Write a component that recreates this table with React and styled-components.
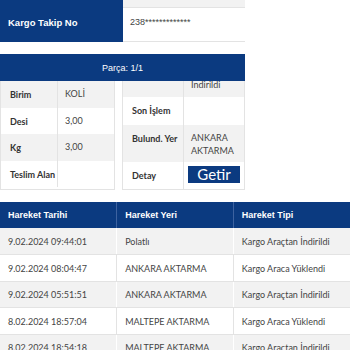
import styled, { createGlobalStyle } from "styled-components";

const navy = "#0b3a80";
const stripe = "#f2f2f2";
const line = "#e3e3e3";

const GlobalStyle = createGlobalStyle`
  *, *::before, *::after { box-sizing: border-box; }
  body {
    margin: 0;
    background: #fff;
    font-family: "Lato", "Noto Sans", sans-serif;
    color: #333;
  }
`;

const Page = styled.div`
  width: 350px;
  height: 350px;
  overflow: hidden;
`;

const Summary = styled.div`
  width: 245px;
  display: grid;
  grid-template-columns: 123px 122px;
`;

const SummaryHead = styled.div`
  background: ${navy};
  color: #fff;
  font-family: "Liberation Sans", Arial, sans-serif;
  font-weight: bold;
  font-size: 9.5px;
  height: ${p => p.h}px;
  display: flex;
  align-items: center;
  padding: 0 0 6px 8px;
`;

const SummaryValue = styled.div`
  background: ${p => (p.alt ? stripe : "#fff")};
  font-family: "Liberation Sans", Arial, sans-serif;
  font-size: 9px;
  color: #444;
  height: ${p => p.h}px;
  display: flex;
  align-items: center;
  padding: 0 0 6px 7px;
  border-bottom: 1px solid ${line};
`;

const Piece = styled.div`
  width: 245px;
  margin-top: 12px;
`;

const PieceTitle = styled.div`
  background: ${navy};
  color: #fff;
  font-family: "Liberation Sans", Arial, sans-serif;
  font-size: 9px;
  height: 27px;
  display: flex;
  align-items: center;
  justify-content: center;
`;

const PieceBody = styled.div`
  display: grid;
  grid-template-columns: 115px 123px;
  column-gap: 7px;
  height: 109px;
`;

const InfoTable = styled.div`
  display: grid;
  grid-template-columns: ${p => p.cols};
  grid-template-rows: ${p => p.rows};
  border: 1px solid ${line};
  border-top: none;
  overflow: hidden;
`;

const InfoLabel = styled.div`
  background: ${p => (p.alt ? stripe : "#fff")};
  font-weight: bold;
  font-size: 9px;
  line-height: 13px;
  color: #333;
  padding: 7px 0 0 9px;
  white-space: nowrap;
  border-right: 1px solid ${line};
`;

const InfoValue = styled.div`
  background: ${p => (p.alt ? stripe : "#fff")};
  font-size: 9px;
  color: #444;
  line-height: 12.5px;
  padding: 7px 6px 0 7px;
  overflow: hidden;
`;

const ClippedValue = styled(InfoValue)`
  padding: 0 6px 6px 7px;
  display: flex;
  align-items: flex-end;
`;

const ButtonCell = styled(InfoValue)`
  padding: 4px 0 0 4px;
`;

const GetirButton = styled.button`
  background: ${navy};
  color: #fff;
  border: none;
  font-family: "Lato", sans-serif;
  font-size: 15px;
  width: 52px;
  height: 17px;
  padding: 0;
  line-height: 17px;
`;

const Moves = styled.table`
  width: 350px;
  margin-top: 12px;
  border-collapse: collapse;
  table-layout: fixed;
`;

const MoveHead = styled.th`
  background: ${navy};
  color: #fff;
  font-family: "Liberation Sans", Arial, sans-serif;
  font-weight: bold;
  font-size: 9px;
  text-align: left;
  height: 26px;
  padding: 0 0 0 8px;
  border-right: 1px solid #3d62a0;
  &:last-child { border-right: none; }
`;

const MoveRow = styled.tr`
  background: ${p => (p.alt ? stripe : "#fff")};
`;

const MoveCell = styled.td`
  font-size: 9px;
  color: #444;
  height: 26.5px;
  padding: 1px 0 0 8px;
  border-right: 1px solid ${p => (p.alt ? "#fff" : line)};
  border-bottom: 1px solid ${line};
  white-space: nowrap;
  &:last-child { border-right: none; }
`;

const moves = [
  ["9.02.2024 09:44:01", "Polatlı", "Kargo Araçtan İndirildi"],
  ["9.02.2024 08:04:47", "ANKARA AKTARMA", "Kargo Araca Yüklendi"],
  ["9.02.2024 05:51:51", "ANKARA AKTARMA", "Kargo Araçtan İndirildi"],
  ["8.02.2024 18:57:04", "MALTEPE AKTARMA", "Kargo Araca Yüklendi"],
  ["8.02.2024 18:54:18", "MALTEPE AKTARMA", "Kargo Araçtan İndirildi"],
];

export default function App() {
  return (
    <Page>
      <GlobalStyle />
      <Summary>
        <SummaryHead h={8} />
        <SummaryValue alt h={8} />
        <SummaryHead h={34}>Kargo Takip No</SummaryHead>
        <SummaryValue h={34}>238*************</SummaryValue>
      </Summary>

      <Piece>
        <PieceTitle>Parça: 1/1</PieceTitle>
        <PieceBody>
          <InfoTable cols="57px 1fr" rows="26.5px 26.5px 26.5px 26.5px">
            <InfoLabel alt>Birim</InfoLabel>
            <InfoValue alt>KOLİ</InfoValue>
            <InfoLabel>Desi</InfoLabel>
            <InfoValue>3,00</InfoValue>
            <InfoLabel alt>Kg</InfoLabel>
            <InfoValue alt>3,00</InfoValue>
            <InfoLabel>Teslim Alan</InfoLabel>
            <InfoValue />
          </InfoTable>
          <InfoTable cols="61px 1fr" rows="16px 28px 37px 28px">
            <InfoLabel alt />
            <ClippedValue alt>Kargo Araçtan İndirildi</ClippedValue>
            <InfoLabel>Son İşlem</InfoLabel>
            <InfoValue />
            <InfoLabel alt>Bulund. Yer</InfoLabel>
            <InfoValue alt>ANKARA AKTARMA</InfoValue>
            <InfoLabel>Detay</InfoLabel>
            <ButtonCell>
              <GetirButton>Getir</GetirButton>
            </ButtonCell>
          </InfoTable>
        </PieceBody>
      </Piece>

      <Moves>
        <thead>
          <tr>
            <MoveHead>Hareket Tarihi</MoveHead>
            <MoveHead>Hareket Yeri</MoveHead>
            <MoveHead>Hareket Tipi</MoveHead>
          </tr>
        </thead>
        <tbody>
          {moves.map((m, i) => (
            <MoveRow key={i} alt={i % 2 === 0}>
              {m.map((v, j) => (
                <MoveCell key={j} alt={i % 2 === 0}>{v}</MoveCell>
              ))}
            </MoveRow>
          ))}
        </tbody>
      </Moves>
    </Page>
  );
}
